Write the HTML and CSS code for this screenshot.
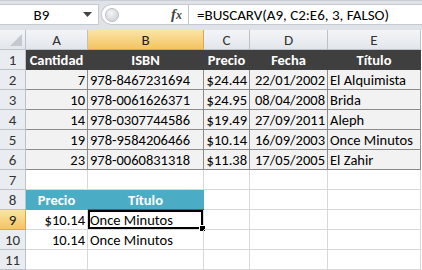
FILE: index.html
```html
<!DOCTYPE html>
<html lang="es">
<head>
  <meta charset="UTF-8" />
  <title>BUSCARV</title>
  <link rel="stylesheet" href="styles.css">
</head>
<body>
  <div class="formula-bar">
    <div class="name-box">
      <span class="cell-ref">B9</span>
      <svg class="drop" width="9" height="5" viewBox="0 0 9 5"><path d="M0 0h9L4.5 5z" fill="#444"/></svg>
    </div>
    <div class="fx-box">
      <span class="grip"></span>
      <span class="fx">f<i>x</i></span>
    </div>
    <div class="formula">=BUSCARV(A9, C2:E6, 3, FALSO)</div>
  </div>

  <div class="sheet">
    <div class="corner"><svg width="12" height="12" viewBox="0 0 12 12"><path d="M12 0V12H0z" fill="#c3c9cf"/></svg></div>
    <div class="col-head">A</div>
    <div class="col-head sel">B</div>
    <div class="col-head">C</div>
    <div class="col-head">D</div>
    <div class="col-head">E</div>

    <div class="row-head">1</div>
    <div class="cell dark">Cantidad</div>
    <div class="cell dark">ISBN</div>
    <div class="cell dark">Precio</div>
    <div class="cell dark">Fecha</div>
    <div class="cell dark">Título</div>

    <div class="row-head">2</div>
    <div class="cell data num">7</div>
    <div class="cell data">978-8467231694</div>
    <div class="cell data num">$24.44</div>
    <div class="cell data num">22/01/2002</div>
    <div class="cell data">El Alquimista</div>

    <div class="row-head">3</div>
    <div class="cell data num">10</div>
    <div class="cell data">978-0061626371</div>
    <div class="cell data num">$24.95</div>
    <div class="cell data num">08/04/2008</div>
    <div class="cell data">Brida</div>

    <div class="row-head">4</div>
    <div class="cell data num">14</div>
    <div class="cell data">978-0307744586</div>
    <div class="cell data num">$19.49</div>
    <div class="cell data num">27/09/2011</div>
    <div class="cell data">Aleph</div>

    <div class="row-head">5</div>
    <div class="cell data num">19</div>
    <div class="cell data">978-9584206466</div>
    <div class="cell data num">$10.14</div>
    <div class="cell data num">16/09/2003</div>
    <div class="cell data">Once Minutos</div>

    <div class="row-head">6</div>
    <div class="cell data num">23</div>
    <div class="cell data">978-0060831318</div>
    <div class="cell data num">$11.38</div>
    <div class="cell data num">17/05/2005</div>
    <div class="cell data">El Zahir</div>

    <div class="row-head">7</div>
    <div class="cell"></div>
    <div class="cell"></div>
    <div class="cell"></div>
    <div class="cell"></div>
    <div class="cell"></div>

    <div class="row-head">8</div>
    <div class="cell teal">Precio</div>
    <div class="cell teal">Título</div>
    <div class="cell"></div>
    <div class="cell"></div>
    <div class="cell"></div>

    <div class="row-head sel">9</div>
    <div class="cell num">$10.14</div>
    <div class="cell active">Once Minutos<span class="handle"></span></div>
    <div class="cell"></div>
    <div class="cell"></div>
    <div class="cell"></div>

    <div class="row-head">10</div>
    <div class="cell num">10.14</div>
    <div class="cell">Once Minutos</div>
    <div class="cell"></div>
    <div class="cell"></div>
    <div class="cell"></div>

    <div class="row-head">11</div>
    <div class="cell"></div>
    <div class="cell"></div>
    <div class="cell"></div>
    <div class="cell"></div>
    <div class="cell"></div>
  </div>
</body>
</html>
```

FILE: styles.css
```css
body {
  margin: 0;
  width: 422px;
  height: 270px;
  overflow: hidden;
  background: #fff;
  font-family: Carlito, Calibri, Lato, sans-serif;
  font-size: 14.5px;
  color: #000;
}

/* formula bar */
.formula-bar {
  display: flex;
  height: 30px;
  box-sizing: border-box;
  padding: 3px 0 5px;
  background: #dfe3e8;
  border-top: 1px solid #c9ced6;
}

.name-box {
  width: 99px;
  display: flex;
  align-items: center;
  background: #fff;
  border: 1px solid #c5cad1;
  border-left: none;
  box-sizing: border-box;
}

.cell-ref {
  flex: 1;
  text-align: center;
  padding-left: 4px;
  font-size: 15px;
}

.drop {
  margin: 0 6px 0 4px;
}

.fx-box {
  width: 87px;
  display: flex;
  align-items: center;
  justify-content: space-between;
  margin-left: 2px;
  background: #fff;
  border: 1px solid #c5cad1;
  border-right: none;
  border-radius: 11px 0 0 11px;
  box-sizing: border-box;
}

.grip {
  width: 12px;
  height: 12px;
  margin-left: 3px;
  border-radius: 50%;
  background: radial-gradient(circle at 40% 35%, #f4f5f7, #c7ccd3);
  border: 1px solid #b7bdc5;
}

.fx {
  margin-right: 6px;
  font-family: "Liberation Serif", serif;
  font-style: italic;
  font-weight: bold;
  font-size: 15px;
  color: #444;
}

.fx i {
  font-size: 12px;
}

.formula {
  flex: 1;
  display: flex;
  align-items: center;
  padding-left: 8px;
  background: #fff;
  border: 1px solid #c5cad1;
  border-right: none;
  font-size: 15px;
}

/* grid */
.sheet {
  display: grid;
  grid-template-columns: 26px 62px 116px 46px 78px 93px;
  grid-auto-rows: 20px;
  background: #fff;
}

.corner,
.col-head,
.row-head {
  box-sizing: border-box;
  display: flex;
  align-items: center;
  justify-content: center;
  background: linear-gradient(#f3f5f8, #e2e6eb);
  border-right: 1px solid #bcc2c9;
  border-bottom: 1px solid #bcc2c9;
  color: #333;
  font-size: 15px;
}

.corner {
  align-items: flex-end;
  justify-content: flex-end;
  padding: 0 3px 3px 0;
}

.row-head {
  background: #e9ecf0;
}

.col-head.sel,
.row-head.sel {
  background: linear-gradient(#fbe4a6, #f3c462);
  border-color: #e1a73e;
  color: #222;
}

.cell {
  box-sizing: border-box;
  display: flex;
  align-items: center;
  padding: 1px 2px 0;
  border-right: 1px solid #d8d8d8;
  border-bottom: 1px solid #d8d8d8;
  white-space: nowrap;
  position: relative;
}

.num {
  justify-content: flex-end;
}

.dark {
  justify-content: center;
  background: #3f3f3f;
  border-color: #3f3f3f;
  color: #fff;
  font-weight: bold;
}

.data {
  background: #f2f2f2;
  border-color: #8c8c8c;
}

.teal {
  justify-content: center;
  background: #4bacc6;
  border-color: #4bacc6;
  color: #fff;
  font-weight: bold;
}

.active {
  box-shadow: inset 0 0 0 2px #000, 0 -1px 0 0 #8b4a2b;
}

.handle {
  position: absolute;
  right: -3px;
  bottom: -3px;
  width: 5px;
  height: 5px;
  background: #000;
  border: 1px solid #fff;
}
```
